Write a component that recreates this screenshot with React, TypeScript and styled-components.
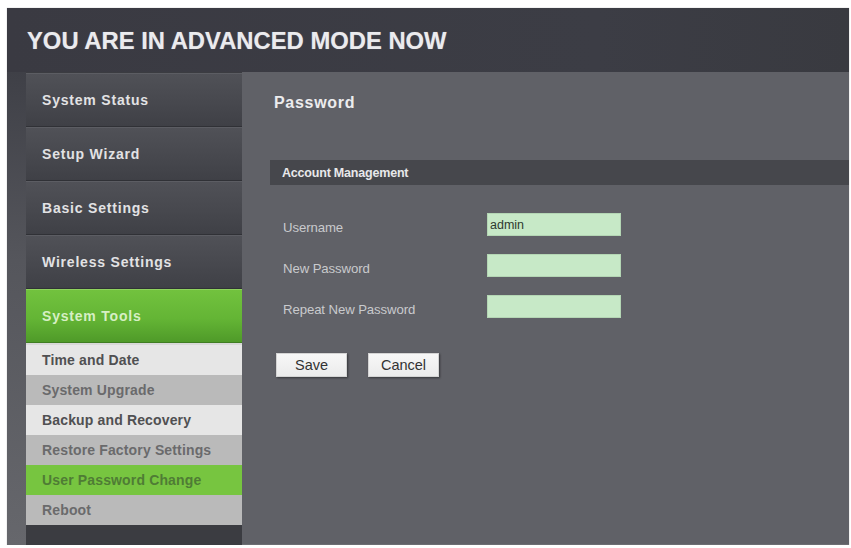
import React from "react";
import styled, { createGlobalStyle } from "styled-components";

const GlobalStyle = createGlobalStyle`
  html, body { margin: 0; padding: 0; background: #ffffff; }
  body { font-family: "Liberation Sans", Arial, sans-serif; }
  * { box-sizing: border-box; }
`;

const Frame = styled.div`
  margin: 8px 0 0 7px;
  width: 842px;
  height: 537px;
  display: flex;
  flex-direction: column;
  background: #606167;
  box-shadow: 0 0 1px rgba(0, 0, 0, 0.3);
`;

const Header = styled.header`
  height: 64px;
  flex: none;
  background: linear-gradient(90deg, #3a3a42 0%, #3c3d45 70%, #393a40 100%);
  display: flex;
  align-items: center;
  padding-left: 20px;
`;

const Title = styled.h1`
  margin: 0;
  padding-top: 2px;
  font-family: "Liberation Sans", Arial, sans-serif;
  font-weight: 700;
  font-size: 23.8px;
  color: #ebebee;
  text-shadow: 0 0 1px rgba(255, 255, 255, 0.4);
`;

const Body = styled.div`
  flex: 1;
  display: flex;
  min-height: 0;
`;

const EdgeStrip = styled.div`
  width: 19px;
  flex: none;
  background: linear-gradient(180deg, #3f4047 0%, #55565c 40%, #66676c 100%);
`;

const Sidebar = styled.nav`
  width: 216px;
  flex: none;
  display: flex;
  flex-direction: column;
  padding-top: 1px;
  background: #3b3c41;
`;

const MenuItem = styled.div<{ $active?: boolean }>`
  height: 54px;
  display: flex;
  align-items: center;
  padding-left: 16px;
  font-family: "Liberation Sans", Arial, sans-serif;
  font-weight: 700;
  font-size: 14px;
  letter-spacing: 0.8px;
  color: ${(p) => (p.$active ? "#d6efc4" : "#e2e2e4")};
  background: ${(p) =>
    p.$active
      ? "linear-gradient(180deg, #72c23e 0%, #64b535 55%, #4f9a29 100%)"
      : "linear-gradient(180deg, #505157 0%, #47484e 55%, #3f4046 100%)"};
  border-top: 1px solid ${(p) => (p.$active ? "#8fd25e" : "#5c5d63")};
  border-bottom: 1px solid ${(p) => (p.$active ? "#3f7d22" : "#303136")};
`;

const SubMenu = styled.div`
  display: flex;
  flex-direction: column;
  border-top: 2px solid #d8d8d8;
`;

type Tone = "light" | "mid" | "green";

const SubItem = styled.div<{ $tone: Tone }>`
  height: 30px;
  display: flex;
  align-items: center;
  padding-left: 16px;
  font-family: "Liberation Sans", Arial, sans-serif;
  font-weight: 700;
  font-size: 14px;
  letter-spacing: 0.15px;
  color: ${(p) => (p.$tone === "green" ? "#4f7c35" : p.$tone === "mid" ? "#6a6a6c" : "#505052")};
  background: ${(p) =>
    p.$tone === "green" ? "#77c540" : p.$tone === "mid" ? "#bababa" : "#e6e6e6"};
`;

const SideFooter = styled.div`
  flex: 1;
  background: #3b3c41;
`;

const Main = styled.main`
  flex: 1;
  background: #606167;
  padding: 22px 0 0 28px;
  border-bottom: 1px solid #6d6e73;
`;

const PageTitle = styled.h2`
  margin: 0 0 0 4px;
  height: 20px;
  font-family: "Liberation Sans", Arial, sans-serif;
  font-weight: 700;
  font-size: 16px;
  letter-spacing: 0.7px;
  color: #ececee;
`;

const SectionBar = styled.div`
  margin-top: 46px;
  height: 25px;
  background: #46474c;
  display: flex;
  align-items: center;
  padding-left: 12px;
  font-family: "Liberation Sans", Arial, sans-serif;
  font-weight: 700;
  font-size: 12.5px;
  letter-spacing: -0.2px;
  color: #e8e8ea;
`;

const Form = styled.div`
  margin-top: 28px;
  display: grid;
  grid-template-columns: 204px 134px;
  row-gap: 18px;
  padding-left: 13px;
`;

const Label = styled.label`
  height: 23px;
  display: flex;
  align-items: center;
  padding-top: 5px;
  font-family: "Liberation Sans", Arial, sans-serif;
  font-size: 13.2px;
  letter-spacing: -0.1px;
  color: #c9cacd;
`;

const Field = styled.input`
  height: 23px;
  width: 134px;
  border: 1px solid #b4d6b4;
  background: #c7e9c7;
  padding: 0 2px;
  font-family: "Liberation Sans", Arial, sans-serif;
  font-size: 12.5px;
  color: #2f3a2f;
  outline: none;
`;

const Actions = styled.div`
  margin-top: 35px;
  margin-left: 6px;
  display: flex;
  gap: 21px;
`;

const Button = styled.button`
  width: 71px;
  height: 24px;
  border: 1px solid #d4d4d4;
  background: linear-gradient(180deg, #f7f7f7 0%, #ebebeb 100%);
  box-shadow: 1px 1px 2px rgba(0, 0, 0, 0.45);
  font-family: "Liberation Sans", Arial, sans-serif;
  font-size: 14.5px;
  color: #333333;
  padding: 0;
`;

const menu = ["System Status", "Setup Wizard", "Basic Settings", "Wireless Settings"];

const subs: { label: string; tone: Tone }[] = [
  { label: "Time and Date", tone: "light" },
  { label: "System Upgrade", tone: "mid" },
  { label: "Backup and Recovery", tone: "light" },
  { label: "Restore Factory Settings", tone: "mid" },
  { label: "User Password Change", tone: "green" },
  { label: "Reboot", tone: "mid" },
];

export default function App() {
  return (
    <>
      <GlobalStyle />
      <Frame>
        <Header>
          <Title>YOU ARE IN ADVANCED MODE NOW</Title>
        </Header>
        <Body>
          <EdgeStrip />
          <Sidebar>
            {menu.map((m) => (
              <MenuItem key={m}>{m}</MenuItem>
            ))}
            <MenuItem $active>System Tools</MenuItem>
            <SubMenu>
              {subs.map((s) => (
                <SubItem key={s.label} $tone={s.tone}>
                  {s.label}
                </SubItem>
              ))}
            </SubMenu>
            <SideFooter />
          </Sidebar>
          <Main>
            <PageTitle>Password</PageTitle>
            <SectionBar>Account Management</SectionBar>
            <Form>
              <Label>Username</Label>
              <Field defaultValue="admin" />
              <Label>New Password</Label>
              <Field type="password" />
              <Label>Repeat New Password</Label>
              <Field type="password" />
            </Form>
            <Actions>
              <Button>Save</Button>
              <Button>Cancel</Button>
            </Actions>
          </Main>
        </Body>
      </Frame>
    </>
  );
}
